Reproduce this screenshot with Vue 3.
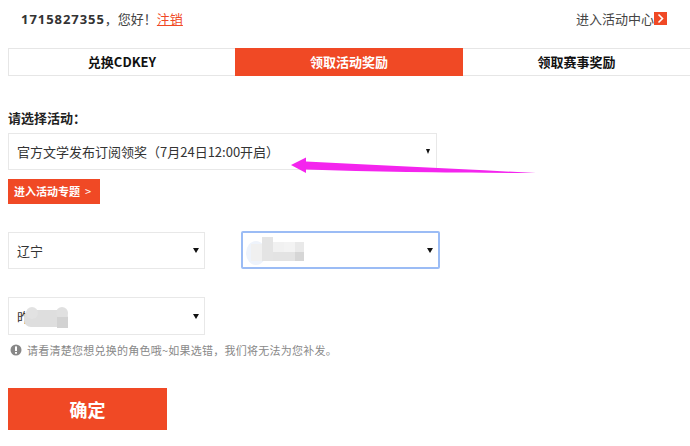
<script setup>
const tabs = [
  { label: '兑换CDKEY', active: false },
  { label: '领取活动奖励', active: true },
  { label: '领取赛事奖励', active: false }
]
</script>

<template>
  <div class="page">
    <header class="top">
      <div class="greet"><b class="uid">1715827355</b><span class="hello">，您好！</span><a class="logout">注销</a></div>
      <div class="center">进入活动中心<span class="chev"><svg width="13" height="13" viewBox="0 0 13 13"><path d="M4.5 2.5 L8.5 6.5 L4.5 10.5" fill="none" stroke="#fff" stroke-width="1.6"/></svg></span></div>
    </header>

    <nav class="tabs">
      <div v-for="t in tabs" :key="t.label" class="tab" :class="{ active: t.active }">{{ t.label }}</div>
    </nav>

    <div class="label">请选择活动：</div>
    <div class="select wide">
      <span>官方文学发布订阅领奖（7月24日12:00开启）</span><i class="caret small"></i>
    </div>
    <div class="topic">进入活动专题<span class="gt">&gt;</span></div>

    <div class="row">
      <div class="select short"><span>辽宁</span><i class="caret"></i></div>
      <div class="select server">
        <svg class="blur b2" width="60" height="30" viewBox="0 0 60 30">
          <ellipse cx="12" cy="17" rx="10" ry="12" fill="#eef3fb"/>
          <rect x="7" y="8" width="11" height="17" fill="#f0f0f0"/>
          <rect x="18" y="1" width="11" height="24" fill="#e4e4e4"/>
          <rect x="29" y="6" width="11" height="10" fill="#f1f1f1"/>
          <rect x="40" y="6" width="11" height="10" fill="#f3f3f3"/>
          <rect x="29" y="16" width="22" height="9" fill="#e3e3e3"/>
          <rect x="51" y="6" width="11" height="10" fill="#e9e9e9"/>
          <rect x="51" y="16" width="11" height="9" fill="#d6d6d6"/>
        </svg>
        <i class="caret"></i>
      </div>
    </div>

    <div class="select short third">
      <span>昨</span>
      <svg class="blur b3" width="48" height="26" viewBox="0 0 48 26">
        <rect x="1" y="6" width="44" height="17" rx="7" fill="#dedede"/>
        <circle cx="9" cy="9" r="6" fill="#e2e2e2"/>
        <circle cx="39" cy="9" r="6" fill="#e0e0e0"/>
        <rect x="34" y="13" width="11" height="11" fill="#d2d2d2"/>
      </svg>
      <i class="caret"></i>
    </div>

    <p class="notice">
      <svg width="12" height="12" viewBox="0 0 12 12"><circle cx="6" cy="6" r="5.5" fill="#888"/><rect x="5" y="2.4" width="2" height="4.6" fill="#fff"/><rect x="5" y="8" width="2" height="1.7" fill="#fff"/></svg>
      <span>请看清楚您想兑换的角色哦~如果选错，我们将无法为您补发。</span>
    </p>

    <button class="confirm">确定</button>

    <svg class="arrow" width="248" height="24" viewBox="0 0 248 24">
      <path d="M1 11 L16 3.5 L16 7.5 C90 11 170 15 246 19 C170 19 90 18 16 15.5 L16 19 Z" fill="#f425ee"/>
    </svg>
  </div>
</template>

<style>
html, body { margin: 0; background: #fff; }
</style>

<style scoped>
.page {
  position: relative;
  width: 690px;
  height: 446px;
  overflow: hidden;
  box-sizing: border-box;
  padding-left: 8px;
  background: #fff;
  font-family: "Noto Sans CJK SC", "Liberation Sans", sans-serif;
  color: #333;
  text-spacing-trim: space-all;
}
.top {
  display: flex;
  justify-content: space-between;
  align-items: center;
  height: 38px;
  margin-bottom: 10px;
  padding: 0 23px 0 13px;
}
.greet { font-size: 13px; line-height: 38px; color: #444; }
.uid { font-family: "Open Sans", "Liberation Sans", sans-serif; font-weight: 700; letter-spacing: 0.95px; color: #333; }
.logout { color: #f04925; text-decoration: underline; }
.center { display: flex; align-items: center; margin-top: -1px; font-size: 13px; color: #444; }
.chev { display: flex; width: 13px; height: 13px; background: #f04925; }
.tabs {
  display: grid;
  grid-template-columns: 227px 228px 227px;
  height: 28px;
  box-sizing: border-box;
}
.tab {
  border: 1px solid #e6e6e6;
  font-size: 13px;
  font-weight: 700;
  line-height: 26px;
  text-align: center;
  color: #111;
}
.tab:first-child { border-right: 0; }
.tab:last-child { border-left: 0; border-right: 0; }
.tab.active { background: #f04925; border-color: #f04925; color: #fff; }
.label {
  margin-top: 34px;
  font-size: 13px;
  font-weight: 700;
  line-height: 16px;
  color: #222;
}
.select {
  position: relative;
  display: flex;
  align-items: center;
  justify-content: space-between;
  box-sizing: border-box;
  border: 1px solid #e8e8e8;
  padding: 0 8px;
  font-size: 13px;
  color: #333;
  background: #fff;
}
.wide { width: 429px; height: 37px; margin-top: 7px; }
.short { width: 197px; height: 37px; }
.server {
  width: 199px;
  height: 38px;
  margin-left: 36px;
  margin-top: -1px;
  border: 2px solid #9bbcf5;
  border-radius: 2px;
  justify-content: flex-end;
}
.third { height: 38px; margin-top: 28px; }
.caret {
  display: block;
  width: 0;
  height: 0;
  margin-left: auto;
  margin-right: -3px;
  border-left: 3px solid transparent;
  border-right: 3px solid transparent;
  border-top: 5px solid #111;
}
.caret.small {
  margin-right: -2px;
  border-left-width: 2.5px;
  border-right-width: 2.5px;
}
.blur { position: absolute; }
.b2 { left: 1px; top: 3px; }
.b3 { left: 14px; top: 6px; }
.topic {
  width: 92px;
  height: 25px;
  margin-top: 9px;
  background: #f04925;
  color: #fff;
  font-size: 11px;
  font-weight: 700;
  line-height: 25px;
  text-indent: 6px;
  white-space: nowrap;
}
.gt { font-weight: 400; text-indent: 0; margin-left: 5px; }
.row { display: flex; align-items: flex-start; margin-top: 28px; }
.notice {
  display: flex;
  align-items: center;
  gap: 5px;
  height: 14px;
  margin: 8px 0 0 2px;
  font-size: 11px;
  line-height: 14px;
  letter-spacing: 0.25px;
  color: #888;
  white-space: nowrap;
}
.confirm {
  display: block;
  width: 159px;
  height: 42px;
  margin-top: 31px;
  border: 0;
  padding: 0;
  background: #f04925;
  color: #fff;
  font-family: inherit;
  font-size: 18px;
  font-weight: 700;
}
.arrow { position: absolute; left: 290px; top: 154px; }
</style>
